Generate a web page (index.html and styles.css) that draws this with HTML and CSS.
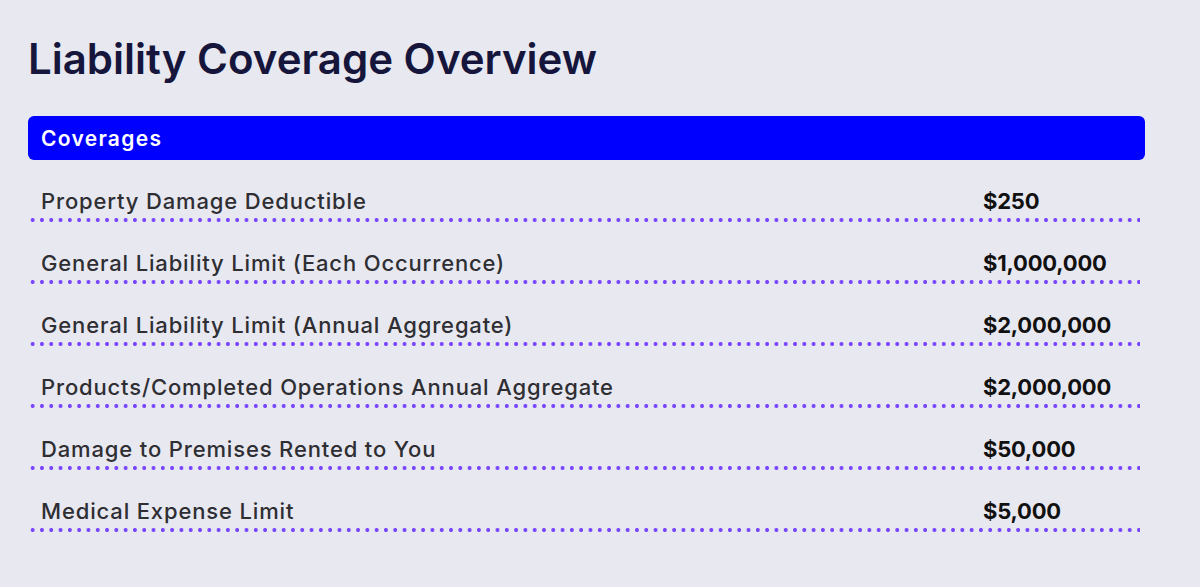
FILE: index.html
```html
<!DOCTYPE html>
<html>
<head>
<meta charset="utf-8">
<link rel="stylesheet" href="styles.css">
</head>
<body>
<main class="page">
  <h1 class="title">Liability Coverage Overview</h1>
  <section class="table">
    <div class="table-head">Coverages</div>
    <div class="row"><span class="label">Property Damage Deductible</span><span class="value">$250</span></div>
    <div class="row"><span class="label">General Liability Limit (Each Occurrence)</span><span class="value">$1,000,000</span></div>
    <div class="row"><span class="label">General Liability Limit (Annual Aggregate)</span><span class="value">$2,000,000</span></div>
    <div class="row"><span class="label">Products/Completed Operations Annual Aggregate</span><span class="value">$2,000,000</span></div>
    <div class="row"><span class="label">Damage to Premises Rented to You</span><span class="value">$50,000</span></div>
    <div class="row"><span class="label">Medical Expense Limit</span><span class="value">$5,000</span></div>
  </section>
</main>
</body>
</html>
```
FILE: styles.css
```css
html, body {
  margin: 0;
  padding: 0;
  background: #e8e8f0;
}
body {
  font-family: Inter, "Noto Sans", sans-serif;
  width: 1200px;
  height: 587px;
  overflow: hidden;
}
.page {
  padding: 34px 55px 0 28px;
}
.title {
  margin: 0;
  font-size: 42px;
  line-height: 50px;
  font-weight: 600;
  color: #16163c;
}
.table {
  margin-top: 32px;
}
.table-head {
  background: #0000ff;
  color: #ffffff;
  border-radius: 6px;
  height: 44px;
  box-sizing: border-box;
  padding: 0 13px;
  display: flex;
  align-items: center;
  font-size: 21px;
  font-weight: 600;
  letter-spacing: 1.3px;
}
.row {
  display: grid;
  grid-template-columns: 1fr 157px;
  align-items: end;
  height: 62px;
  box-sizing: border-box;
  padding: 0 0 8px 11px;
  margin: 0 5px 0 2px;
  font-size: 22px;
  line-height: 26px;
  color: #2e2e33;
  background-image: radial-gradient(circle, #7a45ff 1.7px, transparent 2.3px);
  background-size: 9.3px 4px;
  background-repeat: repeat-x;
  background-position: -2px 100%;
}
.label {
  font-weight: 450;
  letter-spacing: 0.85px;
}
.value {
  font-weight: 700;
  color: #111;
  letter-spacing: -0.2px;
}
```
